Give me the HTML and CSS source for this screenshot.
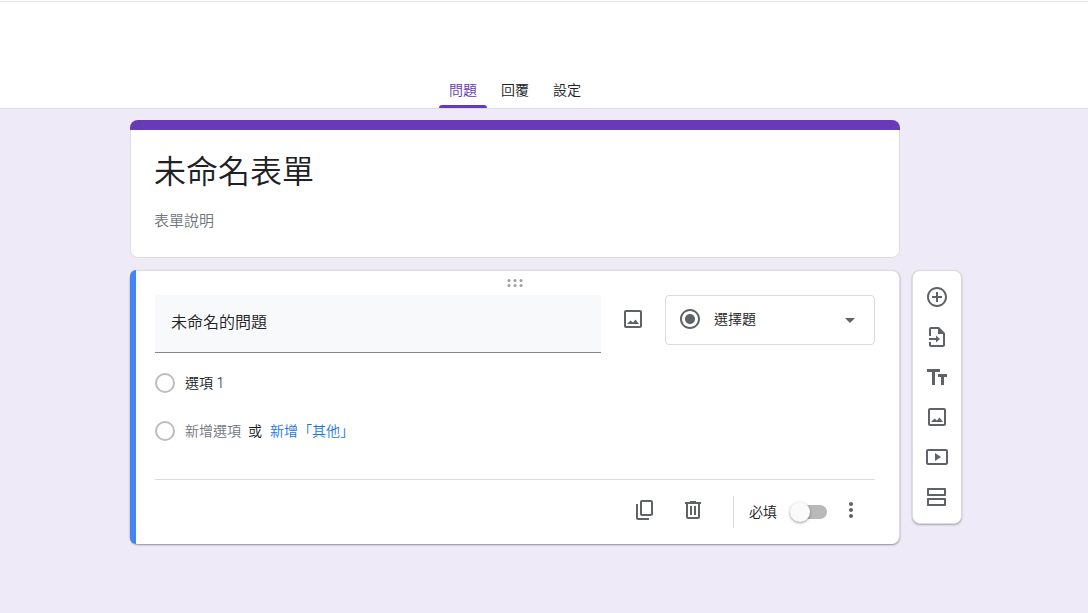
FILE: index.html
```html
<!DOCTYPE html>
<html lang="zh-Hant">
<head>
<meta charset="utf-8">
<meta name="viewport" content="width=device-width, initial-scale=1">
<title>未命名表單</title>
<link rel="stylesheet" href="styles.css">
</head>
<body>
<header class="header">
  <div class="columns">
    <nav class="tabs">
      <a class="tab tab-active" href="#questions">問題</a>
      <a class="tab" href="#responses">回覆</a>
      <a class="tab" href="#settings">設定</a>
    </nav>
  </div>
</header>
<main class="columns page" id="questions">
  <div class="cards">
    <section class="card intro">
      <input class="field form-title" type="text" aria-label="表單標題" value="未命名表單">
      <input class="field form-desc" type="text" aria-label="表單說明" placeholder="表單說明">
    </section>
    <section class="card question">
      <svg class="handle" width="16" height="8" viewBox="0 0 16 8"><g fill="#9e9e9e"><circle cx="2" cy="1.500" r="1.500"/><circle cx="8" cy="1.500" r="1.500"/><circle cx="14" cy="1.500" r="1.500"/><circle cx="2" cy="6.500" r="1.500"/><circle cx="8" cy="6.500" r="1.500"/><circle cx="14" cy="6.500" r="1.500"/></g></svg>
      <div class="question-row">
        <input class="field question-title" type="text" aria-label="問題" value="未命名的問題">
        <button class="icon-button" type="button" aria-label="新增圖片">
          <svg class="icon" viewBox="0 0 24 24"><path d="M19 5v14H5V5h14m0-2H5c-1.100 0-2 .9-2 2v14c0 1.100.9 2 2 2h14c1.100 0 2-.9 2-2V5c0-1.100-.9-2-2-2zM14.500 12.500l-2.500 3-2.500-2L6 17h12l-3.500-4.500z"/></svg>
        </button>
        <div class="type">
          <svg class="icon type-icon" viewBox="0 0 24 24"><path d="M12 7c-2.760 0-5 2.240-5 5s2.240 5 5 5 5-2.240 5-5-2.240-5-5-5zm0-5C6.480 2 2 6.480 2 12s4.480 10 10 10 10-4.480 10-10S17.520 2 12 2zm0 18c-4.420 0-8-3.580-8-8s3.580-8 8-8 8 3.580 8 8-3.580 8-8 8z"/></svg>
          <select class="type-select" aria-label="問題類型"><option>選擇題</option></select>
          <svg class="type-arrow" width="10" height="5" viewBox="0 0 10 5"><path d="M0 0h10L5 5z"/></svg>
        </div>
      </div>
      <div class="option">
        <input class="radio" type="radio" aria-label="選項 1" disabled>
        <input class="field option-text" type="text" aria-label="選項值" value="選項 1">
      </div>
      <div class="option">
        <input class="radio" type="radio" aria-label="新增選項" disabled>
        <button class="add-option" type="button">新增選項</button>
        <span class="or">或</span>
        <button class="add-other" type="button">新增「其他」</button>
      </div>
      <div class="footer">
        <button class="icon-button" type="button" aria-label="複製">
          <svg class="icon" viewBox="0 0 24 24"><path d="M18 2H9C7.900 2 7 2.900 7 4v12c0 1.100.9 2 2 2h9c1.100 0 2-.9 2-2V4c0-1.100-.9-2-2-2zm0 14H9V4h9v12zM3 6h2v14h11v2H5c-1.100 0-2-.9-2-2V6z"/></svg>
        </button>
        <button class="icon-button" type="button" aria-label="刪除">
          <svg class="icon" viewBox="0 0 24 24"><path d="M15 4V3H9v1H4v2h1v13c0 1.100.9 2 2 2h10c1.100 0 2-.9 2-2V6h1V4h-5zm2 15H7V6h10v13zM9 8h2v9H9zm4 0h2v9h-2z"/></svg>
        </button>
        <label class="required"><span>必填</span><input class="toggle" type="checkbox" role="switch"></label>
        <button class="icon-button" type="button" aria-label="更多選項">
          <svg class="icon" viewBox="0 0 24 24"><path d="M12 8c1.100 0 2-.9 2-2s-.9-2-2-2-2 .9-2 2 .9 2 2 2zm0 2c-1.100 0-2 .9-2 2s.9 2 2 2 2-.9 2-2-.9-2-2-2zm0 6c-1.100 0-2 .9-2 2s.9 2 2 2 2-.9 2-2-.9-2-2-2z"/></svg>
        </button>
      </div>
    </section>
  </div>
  <aside class="toolbar">
    <button class="tool" type="button" aria-label="新增問題">
      <svg class="icon" viewBox="0 0 24 24"><path d="M13 7h-2v4H7v2h4v4h2v-4h4v-2h-4V7zm-1-5C6.480 2 2 6.480 2 12s4.480 10 10 10 10-4.480 10-10S17.520 2 12 2zm0 18c-4.410 0-8-3.590-8-8s3.590-8 8-8 8 3.590 8 8-3.590 8-8 8z"/></svg>
    </button>
    <button class="tool" type="button" aria-label="匯入問題">
      <svg class="icon" viewBox="0 0 24 24"><path d="M14 2H6c-1.100 0-2 .9-2 2v7h2V4h7v5h5v11H6v-3H4v3c0 1.100.9 2 2 2h12c1.100 0 2-.9 2-2V8l-6-6zM4 13v2h7v2.500l4-3.500-4-3.500V13H4z"/></svg>
    </button>
    <button class="tool" type="button" aria-label="新增標題與說明">
      <svg class="icon" viewBox="0 0 24 24"><path d="M2 4v3h5v13h3V7h5V4H2zm20 5h-9v3h3v8h3v-8h3V9z"/></svg>
    </button>
    <button class="tool" type="button" aria-label="新增圖片">
      <svg class="icon" viewBox="0 0 24 24"><path d="M19 5v14H5V5h14m0-2H5c-1.100 0-2 .9-2 2v14c0 1.100.9 2 2 2h14c1.100 0 2-.9 2-2V5c0-1.100-.9-2-2-2zM14.500 12.500l-2.500 3-2.500-2L6 17h12l-3.500-4.500z"/></svg>
    </button>
    <button class="tool" type="button" aria-label="新增影片">
      <svg class="icon" viewBox="0 0 24 24"><path d="M10 8v8l6-4-6-4zM21 4H3c-1.100 0-2 .9-2 2v12c0 1.100.9 2 2 2h18c1.100 0 2-.9 2-2V6c0-1.100-.9-2-2-2zm0 14H3V6h18v12z"/></svg>
    </button>
    <button class="tool" type="button" aria-label="新增區段">
      <svg class="icon" viewBox="0 0 24 24"><path d="M20 3H3c-.6 0-1 .4-1 1v6c0 .6.4 1 1 1h17c.6 0 1-.4 1-1V4c0-.6-.4-1-1-1zm-1 6H4V5h15v4zM20 13H3c-.6 0-1 .4-1 1v6c0 .6.4 1 1 1h17c.6 0 1-.4 1-1v-6c0-.6-.4-1-1-1zm-1 6H4v-4h15v4z"/></svg>
    </button>
  </aside>
</main>
</body>
</html>
```
FILE: styles.css
```css
* {
  box-sizing: border-box;
}

body {
  margin: 0;
  min-height: 100vh;
  background: #eeeaf7;
  color: #202124;
  font: 350 14px/20px Roboto, "Noto Sans CJK TC", sans-serif;
}

button,
input,
select {
  margin: 0;
  padding: 0;
  border: 0;
  background: none;
  color: inherit;
  font: inherit;
}

.columns {
  display: grid;
  grid-template-columns: minmax(0, 770px) 50px;
  column-gap: 12px;
  justify-content: center;
  align-items: start;
  padding-left: 4px;
}

.header {
  margin-top: 1px;
  padding-top: 71px;
  border-top: 1px solid #e4e5e8;
  border-bottom: 1px solid #dadce0;
  background: #fff;
  box-shadow: 0 -1px #fff;
}

.tabs {
  display: flex;
  justify-content: center;
  gap: 4px;
}

.tab {
  position: relative;
  width: 48px;
  height: 35px;
  padding-top: 7px;
  color: #202124;
  text-align: center;
  text-decoration: none;
}

.tab-active {
  color: #673ab7;
}

.tab-active::after {
  content: "";
  position: absolute;
  right: 0;
  bottom: 0;
  left: 0;
  height: 3px;
  border-radius: 3px 3px 0 0;
  background: #673ab7;
}

.page {
  padding-top: 11px;
}

.cards {
  display: grid;
  gap: 12px;
}

.card {
  position: relative;
  border-radius: 8px;
  background: #fff;
}

.field {
  display: block;
  width: 100%;
  outline: 0;
}

.intro {
  overflow: hidden;
  padding: 0 24px 25px;
  box-shadow: inset 0 0 0 1px #dadce0;
}

.intro::before {
  content: "";
  display: block;
  height: 10px;
  margin: 0 -24px 15px;
  background: #673ab7;
}

.form-title {
  height: 48px;
  font-size: 32px;
}

.form-desc {
  height: 24px;
  margin-top: 16px;
  font-size: 15px;
}

.form-desc::placeholder {
  color: #70757a;
  opacity: 1;
}

.question {
  padding: 8px 24px 10px 25px;
  border: 1px solid #dadce0;
  border-width: 1px 1px 0 0;
  box-shadow: 0 1px 2px rgba(0, 0, 0, 0.4);
}

.question::before {
  content: "";
  position: absolute;
  top: -1px;
  bottom: 0;
  left: 0;
  width: 6px;
  border-radius: 8px 0 0 8px;
  background: #4285f4;
}

.handle {
  display: block;
  margin: 0 auto 8px;
}

.question-row {
  display: flex;
  align-items: flex-start;
  gap: 8px;
  margin-bottom: 6px;
}

.question-title {
  flex: 1;
  min-width: 0;
  height: 58px;
  padding: 0 16px 6px;
  border-bottom: 1px solid #80868b;
  background: #f8f9fa;
  font-size: 16px;
}

.icon-button {
  display: grid;
  flex: none;
  place-items: center;
  width: 48px;
  height: 48px;
}

.icon {
  display: block;
  width: 24px;
  height: 24px;
  fill: #5f6368;
}

.type {
  position: relative;
  flex: none;
  width: 210px;
}

.type-select {
  appearance: none;
  width: 100%;
  height: 50px;
  padding: 0 48px 2px;
  border: 1px solid #dadce0;
  border-radius: 4px;
}

.type-icon {
  position: absolute;
  top: 12px;
  left: 13px;
}

.type-arrow {
  position: absolute;
  top: 23px;
  right: 20px;
  fill: #5f6368;
}

.option {
  display: flex;
  align-items: center;
  height: 48px;
}

.radio {
  appearance: none;
  flex: none;
  width: 20px;
  height: 20px;
  margin-right: 10px;
  border: 2px solid #bdbdbd;
  border-radius: 50%;
}

.add-option {
  color: #70757a;
}

.or {
  margin: 0 8px 0 7px;
}

.add-other {
  color: #1a73e8;
}

.footer {
  display: flex;
  justify-content: flex-end;
  align-items: center;
  margin-top: 24px;
  padding-top: 6px;
  border-top: 1px solid #dadce0;
}

.required {
  display: flex;
  align-items: center;
  gap: 13px;
  height: 32px;
  margin: 4px 0 0 16px;
  padding-left: 15px;
  border-left: 1px solid #dadce0;
}

.toggle {
  appearance: none;
  position: relative;
  width: 37px;
  height: 14px;
  border-radius: 7px;
  background: linear-gradient(90deg, transparent 8px, #b9b9b9 8px);
}

.toggle::before {
  content: "";
  position: absolute;
  top: -3px;
  left: 0;
  width: 20px;
  height: 20px;
  border-radius: 50%;
  background: #fafafa;
  box-shadow: 0 1px 3px rgba(0, 0, 0, 0.4);
}

.toolbar {
  margin-top: 150px;
  padding: 6px 4px;
  border: 1px solid #dadce0;
  border-radius: 8px;
  background: #fff;
  box-shadow: 0 1px 2px rgba(0, 0, 0, 0.3);
}

.tool {
  display: grid;
  place-items: center;
  width: 40px;
  height: 40px;
}
```
